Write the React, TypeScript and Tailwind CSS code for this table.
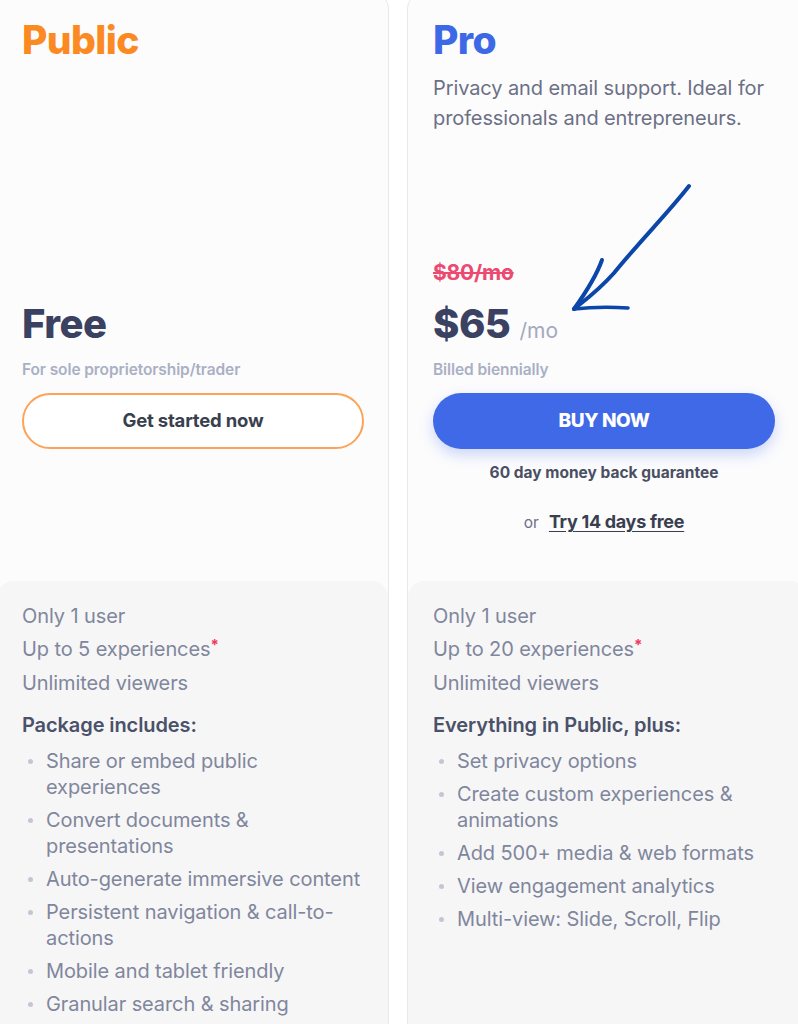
import React from "react";

type Plan = {
  name: string;
  nameColor: string;
  desc?: string[];
  strike?: string;
  price: string;
  per?: string;
  sub: string;
  button: "outline" | "solid";
  buttonText: string;
  extras: boolean;
  limits: { text: string; star?: boolean }[];
  includesTitle: string;
  items: string[][];
};

const plans: Plan[] = [
  {
    name: "Public",
    nameColor: "text-[#fb8a22]",
    price: "Free",
    sub: "For sole proprietorship/trader",
    button: "outline",
    buttonText: "Get started now",
    extras: false,
    limits: [
      { text: "Only 1 user" },
      { text: "Up to 5 experiences", star: true },
      { text: "Unlimited viewers" },
    ],
    includesTitle: "Package includes:",
    items: [
      ["Share or embed public", "experiences"],
      ["Convert documents &", "presentations"],
      ["Auto-generate immersive content"],
      ["Persistent navigation & call-to-", "actions"],
      ["Mobile and tablet friendly"],
      ["Granular search & sharing"],
    ],
  },
  {
    name: "Pro",
    nameColor: "text-[#3e69e6]",
    desc: ["Privacy and email support. Ideal for", "professionals and entrepreneurs."],
    strike: "$80/mo",
    price: "$65",
    per: "/mo",
    sub: "Billed biennially",
    button: "solid",
    buttonText: "BUY NOW",
    extras: true,
    limits: [
      { text: "Only 1 user" },
      { text: "Up to 20 experiences", star: true },
      { text: "Unlimited viewers" },
    ],
    includesTitle: "Everything in Public, plus:",
    items: [
      ["Set privacy options"],
      ["Create custom experiences &", "animations"],
      ["Add 500+ media & web formats"],
      ["View engagement analytics"],
      ["Multi-view: Slide, Scroll, Flip"],
    ],
  },
];

function Card({ p, className }: { p: Plan; className: string }) {
  return (
    <div
      className={`shrink-0 mt-[-6px] rounded-[14px] border border-[#e8e8ed] bg-[#fcfcfd] flex flex-col overflow-hidden ${className}`}
    >
      <div className="shrink-0 h-[586px] px-[25px] pt-[22px] flex flex-col">
        <div className="shrink-0 h-[244px]">
          <h2 className={`text-[39px] leading-[46px] font-extrabold tracking-[-0.6px] ${p.nameColor}`}>{p.name}</h2>
          {p.desc && (
            <p className="mt-[10px] text-[20px] leading-[30px] text-[#6c7086] tracking-[-0.1px]">
              {p.desc[0]}
              <br />
              {p.desc[1]}
            </p>
          )}
        </div>
        <div className="h-[24px] text-[21px] leading-[24px] font-bold text-[#ec4a70] line-through tracking-[-0.2px]">
          {p.strike ?? ""}
        </div>
        <div className="mt-[16px] h-[46px] flex items-baseline gap-[9px]">
          <span className="text-[40px] leading-[46px] font-extrabold text-[#3a4161] tracking-[-0.5px]">{p.price}</span>
          {p.per && <span className="text-[21px] text-[#a4a9bd]">{p.per}</span>}
        </div>
        <div className="mt-[13px] text-[15.5px] leading-[20px] font-semibold text-[#aab0c4] tracking-[-0.1px]">{p.sub}</div>
        {p.button === "outline" ? (
          <button className="mt-[13px] h-[56px] w-[342px] rounded-full border-2 border-[#fba459] bg-white text-[18.5px] font-bold text-[#3a3f4f] tracking-[-0.2px]">
            {p.buttonText}
          </button>
        ) : (
          <button className="mt-[13px] h-[56px] w-[342px] rounded-full bg-[#3f69e6] text-[19px] font-extrabold text-white tracking-[-0.4px] shadow-[0_6px_14px_rgba(63,105,230,0.25)]">
            {p.buttonText}
          </button>
        )}
        {p.extras && (
          <div className="w-[342px] flex flex-col items-center">
            <div className="mt-[14px] text-[15.5px] leading-[20px] font-bold text-[#4a4f62]">60 day money back guarantee</div>
            <div className="mt-[27px] text-[18px] leading-[24px] flex items-baseline gap-[10px]">
              <span className="text-[15.5px] text-[#6c7086]">or</span>
              <a className="font-bold text-[#3a3f4f] underline underline-offset-[3px] tracking-[-0.3px]">Try 14 days free</a>
            </div>
          </div>
        )}
      </div>
      <div className="flex-1 bg-[#f6f6f7] rounded-t-[16px] px-[25px] pt-[19px] pb-[40px]">
        {p.limits.map((l) => (
          <div key={l.text} className="text-[20px] leading-[33px] text-[#80869c] tracking-[-0.1px]">
            {l.text}
            {l.star && <span className="text-[#ee3a63] text-[15px] relative top-[-6px] font-bold">*</span>}
          </div>
        ))}
        <div className="mt-[9px] text-[20px] leading-[33px] font-semibold text-[#4b5169] tracking-[-0.1px]">{p.includesTitle}</div>
        <ul className="mt-[6px] flex flex-col gap-[7px]">
          {p.items.map((it) => (
            <li key={it[0]} className="flex text-[20px] leading-[26px] text-[#80869c] tracking-[-0.1px]">
              <span className="w-[24px] shrink-0 flex justify-start pl-[6px] pt-[11px]">
                <span className="block w-[5px] h-[5px] rounded-full bg-[#c3c7d4]" />
              </span>
              <span>
                {it.map((line, i) => (
                  <React.Fragment key={i}>
                    {i > 0 && <br />}
                    {line}
                  </React.Fragment>
                ))}
              </span>
            </li>
          ))}
        </ul>
      </div>
    </div>
  );
}

export default function App() {
  return (
    <div className="relative w-[798px] h-[1024px] overflow-hidden bg-white font-['Inter',sans-serif]">
      <div className="flex gap-[18px] ml-[-4px]">
        <Card p={plans[0]} className="w-[393px] h-[1060px]" />
        <Card p={plans[1]} className="w-[400px] h-[1060px]" />
      </div>
      <svg
        className="absolute left-[560px] top-[175px]"
        width="140"
        height="145"
        viewBox="0 0 140 145"
        fill="none"
        stroke="#0b46a8"
        strokeLinecap="round"
        strokeLinejoin="round"
      >
        <path d="M129 11 C 108 38, 80 66, 54 98 C 38 116, 24 126, 14 134" strokeWidth="4" />
        <path d="M42 85 C 36 102, 24 120, 14 134" strokeWidth="4" />
        <path d="M14 134 C 32 132, 52 132, 68 133" strokeWidth="3.6" />
      </svg>
    </div>
  );
}
